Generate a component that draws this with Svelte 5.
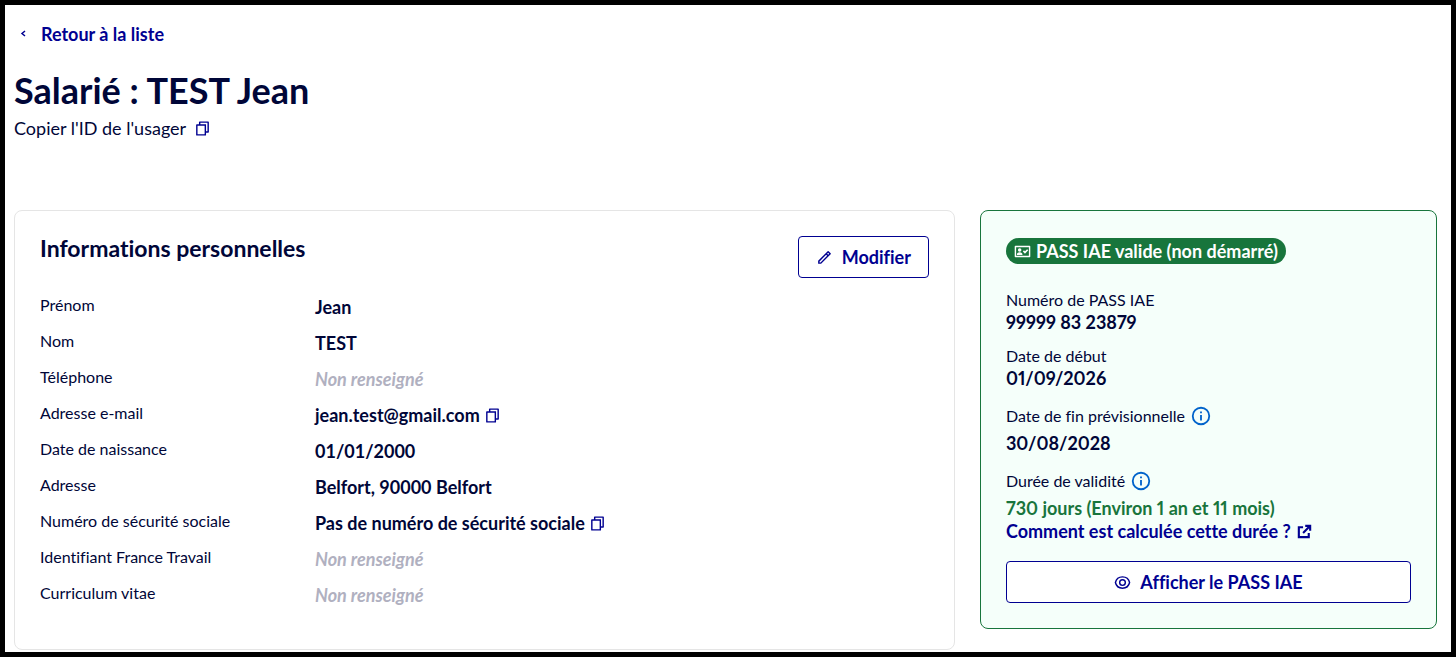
<script>
	const infos = [
		{ label: 'Prénom', value: 'Jean' },
		{ label: 'Nom', value: 'TEST' },
		{ label: 'Téléphone' },
		{ label: 'Adresse e-mail', value: 'jean.test@gmail.com', copy: true },
		{ label: 'Date de naissance', value: '01/01/2000' },
		{ label: 'Adresse', value: 'Belfort, 90000 Belfort' },
		{ label: 'Numéro de sécurité sociale', value: 'Pas de numéro de sécurité sociale', copy: true },
		{ label: 'Identifiant France Travail' },
		{ label: 'Curriculum vitae' }
	];

	const pass = [
		{ label: 'Numéro de PASS IAE', value: '99999 83 23879' },
		{ label: 'Date de début', value: '01/09/2026' },
		{ label: 'Date de fin prévisionnelle', value: '30/08/2028', info: true },
		{ label: 'Durée de validité', value: '730 jours (Environ 1 an et 11 mois)', info: true, valid: true }
	];

	const copy = (text) => navigator.clipboard?.writeText(text);
</script>

{#snippet copyIcon()}
	<svg class="icon-copy" viewBox="0 0 24 24" aria-hidden="true">
		<path
			d="M7 6V3a1 1 0 0 1 1-1h12a1 1 0 0 1 1 1v14a1 1 0 0 1-1 1h-3v3a1 1 0 0 1-1 1H4a1 1 0 0 1-1-1V7a1 1 0 0 1 1-1h3ZM5 8v12h10V8H5Zm4-2h8v10h2V4H9v2Z"
		/>
	</svg>
{/snippet}

<main>
	<a class="back" href="#liste">
		<svg viewBox="0 0 12 12" aria-hidden="true"><path d="M8 3 5 5.500l3 2.500" /></svg>
		Retour à la liste
	</a>

	<h1>Salarié : TEST Jean</h1>
	<button class="copy" onclick={() => copy('usager')}>
		Copier l'ID de l'usager
		{@render copyIcon()}
	</button>

	<div class="columns">
		<section class="card">
			<header>
				<h2>Informations personnelles</h2>
				<button class="btn">
					<svg class="icon-pencil" viewBox="0 0 24 24" aria-hidden="true">
						<path
							d="m15.73 9.58-1.42-1.42L5 17.48v1.41h1.41l9.32-9.31Zm1.41-1.42 1.42-1.41-1.42-1.42-1.41 1.42 1.41 1.41Zm-9.9 12.73H3v-4.24L16.44 3.21a1 1 0 0 1 1.41 0l2.83 2.83a1 1 0 0 1 0 1.41L7.24 20.89Z"
						/>
					</svg>
					Modifier
				</button>
			</header>
			<dl class="infos">
				{#each infos as { label, value, copy: copyable }}
					<div>
						<dt>{label}</dt>
						<dd class:empty={!value}>
							{value ?? 'Non renseigné'}
							{#if copyable}
								<button class="copy" aria-label="Copier" onclick={() => copy(value)}>
									{@render copyIcon()}
								</button>
							{/if}
						</dd>
					</div>
				{/each}
			</dl>
		</section>

		<aside class="card pass">
			<p class="badge">
				<svg viewBox="0 0 24 24" aria-hidden="true">
					<path
						d="M2 4h20a1 1 0 0 1 1 1v14a1 1 0 0 1-1 1H2a1 1 0 0 1-1-1V5a1 1 0 0 1 1-1Zm1 2v12h18V6H3Zm1 11a4 4 0 0 1 8 0H4Zm4-4.500a2.500 2.500 0 1 1 0-5 2.500 2.500 0 0 1 0 5Zm7.500 2.500-3-3 1.600-1.600 1.400 1.400 3-3 1.600 1.600-4.600 4.600Z"
					/>
				</svg>
				PASS IAE valide (non démarré)
			</p>
			<dl>
				{#each pass as { label, value, info, valid }}
					<div>
						<dt class:info>
							{label}
							{#if info}
								<svg viewBox="0 0 24 24" aria-hidden="true">
									<circle cx="12" cy="12" r="9" />
									<path d="M12 11v6M12 7v2" />
								</svg>
							{/if}
						</dt>
						<dd class:valid>{value}</dd>
					</div>
				{/each}
			</dl>
			<a class="help" href="#duree">
				Comment est calculée cette durée ?
				<svg viewBox="0 0 24 24" aria-hidden="true">
					<path d="M10 6H4v14h14v-6M13 4h7v7M20 4 10 14" />
				</svg>
			</a>
			<button class="btn">
				<svg class="icon-eye" viewBox="0 0 24 24" aria-hidden="true">
					<path d="M2 12c1-4.500 5-8 10-8s9 3.500 10 8c-1 4.500-5 8-10 8s-9-3.500-10-8Z" />
					<circle cx="12" cy="12" r="4" />
				</svg>
				Afficher le PASS IAE
			</button>
		</aside>
	</div>
</main>

<style>
	:global(body) {
		margin: 0;
		background: #fff;
	}

	main {
		box-sizing: border-box;
		min-height: 100vh;
		padding: 17px 14px 2px 9px;
		border: 5px solid #000;
		color: #000638;
		font-family: Lato, 'Open Sans', sans-serif;
		font-size: 18px;
		font-variant-ligatures: none;
		line-height: 24px;
	}

	h1,
	h2,
	p,
	dl,
	dd {
		margin: 0;
	}

	svg {
		flex: none;
		fill: currentColor;
	}

	button {
		font: inherit;
		font-variant-ligatures: none;
		cursor: pointer;
	}

	a {
		color: #000091;
		font-weight: 700;
		text-decoration: none;
	}

	.back {
		display: flex;
		align-items: center;
		gap: 12px;
		width: fit-content;
		padding-left: 3px;
	}

	.back svg {
		width: 12px;
		height: 12px;
		fill: none;
		stroke: currentColor;
		stroke-width: 1.5;
	}

	h1 {
		margin-top: 22px;
		font-size: 36px;
		line-height: 44px;
	}

	.copy {
		display: flex;
		align-items: center;
		gap: 8px;
		padding: 0;
		border: 0;
		background: none;
		color: inherit;
	}

	h1 + .copy {
		margin-top: 4px;
	}

	.icon-copy {
		width: 17px;
		height: 17px;
		color: #000091;
	}

	.columns {
		display: grid;
		grid-template-columns: 35fr 17fr;
		align-items: start;
		gap: 25px;
		margin-top: 70px;
	}

	.card {
		padding: 25px 25px 42px;
		border: 1px solid #e5e5e5;
		border-radius: 8px;
	}

	header {
		display: flex;
		align-items: flex-start;
		justify-content: space-between;
	}

	h2 {
		font-size: 23px;
		line-height: 24px;
	}

	.btn {
		display: flex;
		align-items: center;
		justify-content: center;
		gap: 9px;
		box-sizing: border-box;
		height: 42px;
		padding: 0 17px;
		border: 1px solid #000091;
		border-radius: 4px;
		background: #fff;
		color: #000091;
		font-weight: 700;
	}

	.infos {
		display: grid;
		gap: 12px;
		margin-top: 17px;
	}

	.infos div {
		display: grid;
		grid-template-columns: 275px 1fr;
	}

	dt {
		font-size: 16px;
		line-height: 20px;
	}

	dd {
		display: flex;
		align-items: center;
		gap: 4px;
		font-weight: 700;
	}

	.empty {
		color: #b0b0c0;
		font-style: italic;
	}

	.icon-pencil {
		width: 17px;
		height: 17px;
	}

	.pass {
		padding-bottom: 25px;
		border-color: #18753c;
		background: #f5fffa;
		font-variant-numeric: proportional-nums;
	}

	.badge {
		display: flex;
		align-items: center;
		gap: 5px;
		width: fit-content;
		margin-top: 2px;
		padding: 0 8px;
		border-radius: 13px;
		background: #18753c;
		color: #fff;
		font-weight: 700;
		line-height: 26px;
	}

	.badge svg {
		width: 17px;
		height: 17px;
		fill-rule: evenodd;
	}

	.pass dl {
		display: grid;
		gap: 10px;
		margin-top: 24px;
	}

	.pass dt,
	.pass dd,
	.help {
		line-height: 23px;
	}

	.pass dt {
		display: flex;
		align-items: center;
		gap: 5px;
	}

	.pass .info {
		line-height: 32px;
	}

	.info svg {
		width: 22px;
		height: 22px;
		fill: none;
		stroke: #0063cb;
		stroke-width: 2;
	}

	.valid {
		color: #18753c;
	}

	.help {
		display: flex;
		align-items: center;
		gap: 5px;
	}

	.help svg {
		width: 17px;
		height: 17px;
		fill: none;
		stroke: currentColor;
		stroke-width: 3;
	}

	.pass .btn {
		width: 100%;
		margin-top: 18px;
	}

	.icon-eye {
		width: 17px;
		height: 17px;
		fill: none;
		stroke: currentColor;
		stroke-width: 2;
	}

	@media (max-width: 900px) {
		.columns {
			grid-template-columns: 1fr;
		}
	}
</style>
